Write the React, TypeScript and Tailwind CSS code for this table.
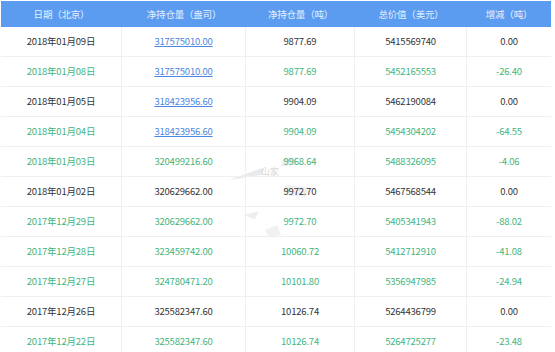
import React from "react";

type Row = { d: string; a: string; link: boolean; b: string; c: string; e: string; green: boolean };

const rows: Row[] = [
  { d: "2018年01月09日", a: "317575010.00", link: true, b: "9877.69", c: "5415569740", e: "0.00", green: false },
  { d: "2018年01月08日", a: "317575010.00", link: true, b: "9877.69", c: "5452165553", e: "-26.40", green: true },
  { d: "2018年01月05日", a: "318423956.60", link: true, b: "9904.09", c: "5462190084", e: "0.00", green: false },
  { d: "2018年01月04日", a: "318423956.60", link: true, b: "9904.09", c: "5454304202", e: "-64.55", green: true },
  { d: "2018年01月03日", a: "320499216.60", link: false, b: "9968.64", c: "5488326095", e: "-4.06", green: true },
  { d: "2018年01月02日", a: "320629662.00", link: false, b: "9972.70", c: "5467568544", e: "0.00", green: false },
  { d: "2017年12月29日", a: "320629662.00", link: false, b: "9972.70", c: "5405341943", e: "-88.02", green: true },
  { d: "2017年12月28日", a: "323459742.00", link: false, b: "10060.72", c: "5412712910", e: "-41.08", green: true },
  { d: "2017年12月27日", a: "324780471.20", link: false, b: "10101.80", c: "5356947985", e: "-24.94", green: true },
  { d: "2017年12月26日", a: "325582347.60", link: false, b: "10126.74", c: "5264436799", e: "0.00", green: false },
  { d: "2017年12月22日", a: "325582347.60", link: false, b: "10126.74", c: "5264725277", e: "-23.48", green: true },
];

const widths = ["w-[121px]", "w-[124px]", "w-[109px]", "w-[112px]", "w-[84px]"];

export default function App() {
  const font = { fontFamily: '"Noto Sans CJK SC", "Noto Sans", sans-serif' };
  return (
    <div className="w-[555px] h-[352px] overflow-hidden bg-white relative" style={font}>
      <svg className="absolute left-[225px] top-[145px]" width="90" height="110" viewBox="0 0 90 110">
        <path d="M4 35 L40 22 L36 30 Z" fill="#d0d0d0" opacity="0.45" />
        <path d="M58 14 L72 12 L70 20 L56 21 Z" fill="#cfcfcf" opacity="0.4" />
        <path d="M18 70 L34 66 L30 74 Z" fill="#d5d5d5" opacity="0.4" />
        <path d="M60 40 L85 42 L80 52 L58 50 Z" fill="#d6d6d6" opacity="0.35" />
        <path d="M40 85 L52 80 L56 90 L44 92 Z" fill="#d6d6d6" opacity="0.35" />
        <text x="36" y="30" fontSize="9" fill="#cfcfcf" opacity="0.8">山家</text>
      </svg>
      <div className="relative pl-[1px] pt-[1px] w-[551px] tracking-[-0.2px]">
        <div className="flex h-[26px] bg-[#5c9cf0] text-[#e4efff] text-[9.5px] items-center">
          {["日期（北京）", "净持仓量（盎司）", "净持仓量（吨）", "总价值（美元）", "增减（吨）"].map((h, i) => (
            <div key={i} className={`${widths[i]} text-center shrink-0`}>{h}</div>
          ))}
        </div>
        {rows.map((r, i) => {
          const color = r.green ? "text-[#45b47c]" : "text-[#333333]";
          return (
            <div key={i} className={`flex h-[30px] border-b border-[#efefef] items-center text-[9.5px] ${color}`}>
              <div className={`${widths[0]} h-full flex items-center justify-center border-r border-[#efefef] shrink-0`}>{r.d}</div>
              <div className={`${widths[1]} h-full flex items-center justify-center border-r border-[#efefef] shrink-0`}>
                {r.link ? <span className="text-[#4a87e0] underline">{r.a}</span> : r.a}
              </div>
              <div className={`${widths[2]} h-full flex items-center justify-center border-r border-[#efefef] shrink-0`}>{r.b}</div>
              <div className={`${widths[3]} h-full flex items-center justify-center border-r border-[#efefef] shrink-0`}>{r.c}</div>
              <div className={`${widths[4]} h-full flex items-center justify-center shrink-0`}>{r.e}</div>
            </div>
          );
        })}
      </div>
    </div>
  );
}
